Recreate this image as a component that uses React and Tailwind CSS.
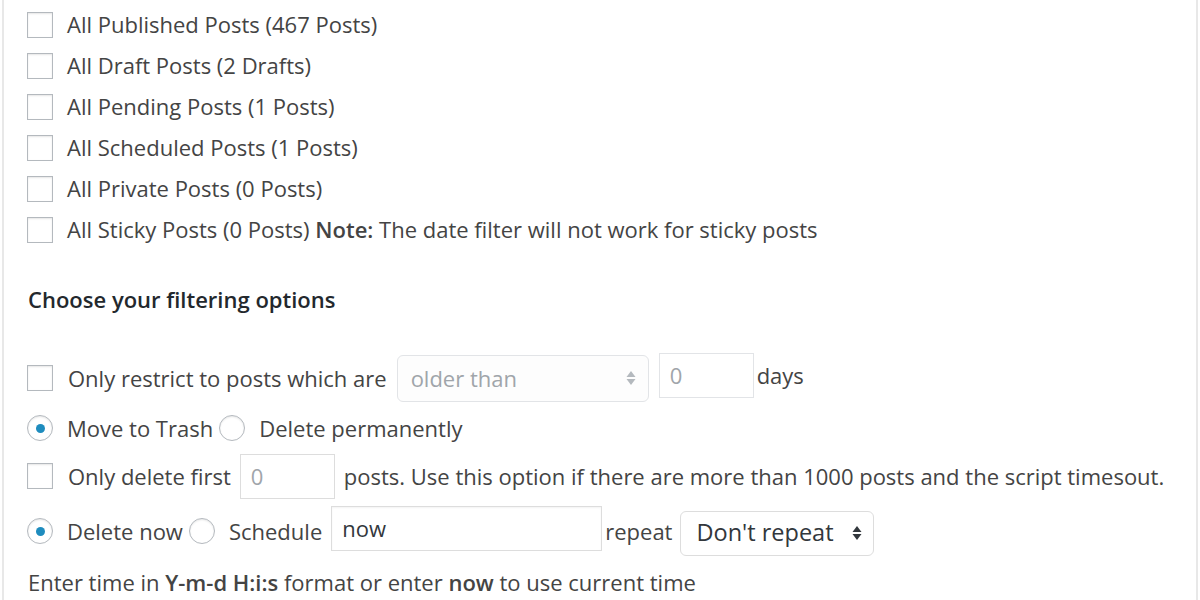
import React from 'react'

function Checkbox() {
  return (
    <span className="inline-block w-[26px] h-[26px] shrink-0 border border-[#b4b9be] bg-white shadow-[inset_0_1px_2px_rgba(0,0,0,0.1)]" />
  )
}

function Radio({ checked, className = '' }) {
  return (
    <span className={`inline-flex w-[26px] h-[26px] shrink-0 items-center justify-center rounded-full border border-[#b4b9be] bg-white shadow-[inset_0_1px_2px_rgba(0,0,0,0.1)] ${className}`}>
      {checked && <span className="w-[9px] h-[9px] rounded-full bg-[#1e8cbe]" />}
    </span>
  )
}

function Arrows({ color }) {
  return (
    <svg width="10" height="16" viewBox="0 0 10 16">
      <path d="M5 1 L9.5 7 L0.5 7 Z" fill={color} />
      <path d="M5 15 L9.5 9 L0.5 9 Z" fill={color} />
    </svg>
  )
}

const postTypes = [
  'All Published Posts (467 Posts)',
  'All Draft Posts (2 Drafts)',
  'All Pending Posts (1 Posts)',
  'All Scheduled Posts (1 Posts)',
  'All Private Posts (0 Posts)',
]

export default function App() {
  return (
    <div className="w-[1200px] h-[600px] overflow-hidden bg-white px-[2px] font-['Open_Sans',sans-serif] text-[22px] text-[#444]">
      <div className="h-full border-x-2 border-[#e8e8e8] pl-[23px] pt-[4px]">
        {postTypes.map(label => (
          <div key={label} className="flex items-center h-[41px] gap-[14px]">
            <Checkbox />
            <span>{label}</span>
          </div>
        ))}
        <div className="flex items-center h-[41px] gap-[14px]">
          <Checkbox />
          <span>All Sticky Posts (0 Posts) <strong className="font-semibold">Note:</strong> The date filter will not work for sticky posts</span>
        </div>

        <h3 className="mt-[34px] h-[30px] flex items-center pl-[1px] font-semibold text-[22px] text-[#23282d]">Choose your filtering options</h3>

        {/* restrict row */}
        <div className="mt-[39px] flex items-center h-[50px]">
          <Checkbox />
          <span className="ml-[15px]">Only restrict to posts which are</span>
          <div className="ml-[10px] w-[252px] h-[47px] flex items-center justify-between rounded-[6px] border border-[#e2e4e7] bg-[#fdfdfd] pl-[13px] pr-[12px] text-[#a0a5aa]">
            <span>older than</span>
            <Arrows color="#b4b9be" />
          </div>
          <div className="ml-[10px] w-[95px] h-[45px] mb-[5px] flex items-center border border-[#e2e4e7] bg-white pl-[10px] text-[#a0a5aa]">0</div>
          <span className="ml-[3px] mb-[5px]">days</span>
        </div>

        {/* trash row */}
        <div className="flex items-center h-[50px]">
          <Radio checked />
          <span className="ml-[14px]">Move to Trash</span>
          <Radio className="ml-[6px]" />
          <span className="ml-[14px]">Delete permanently</span>
        </div>

        {/* delete first row */}
        <div className="flex items-center h-[46px]">
          <Checkbox />
          <span className="ml-[15px]">Only delete first</span>
          <div className="ml-[9px] w-[95px] h-[45px] flex items-center border border-[#ddd] bg-white pl-[10px] text-[#a0a5aa]">0</div>
          <span className="ml-[9px]">posts. Use this option if there are more than 1000 posts and the script timesout.</span>
        </div>

        {/* schedule row */}
        <div className="flex items-center h-[64px]">
          <Radio checked />
          <span className="ml-[14px]">Delete now</span>
          <Radio className="ml-[6px]" />
          <span className="ml-[14px]">Schedule</span>
          <div className="ml-[9px] w-[271px] h-[45px] mt-[-6px] flex items-center border border-[#ddd] bg-white pl-[10px] text-[#32373c] shadow-[inset_0_1px_2px_rgba(0,0,0,0.05)]">now</div>
          <span className="ml-[3px]">repeat</span>
          <div className="ml-[8px] w-[194px] h-[45px] flex items-center justify-between rounded-[6px] border border-[#ddd] bg-white pl-[15px] pr-[11px] text-[#32373c] mt-[4px]">
            <span className="text-[23.5px]">Don't repeat</span>
            <Arrows color="#32373c" />
          </div>
        </div>

        <p className="mt-[4px] h-[30px] flex items-center pl-[1px] text-[22px]">
          <span>Enter time in <strong className="font-semibold">Y-m-d H:i:s</strong> format or enter <strong className="font-semibold">now</strong> to use current time</span>
        </p>
      </div>
    </div>
  )
}
